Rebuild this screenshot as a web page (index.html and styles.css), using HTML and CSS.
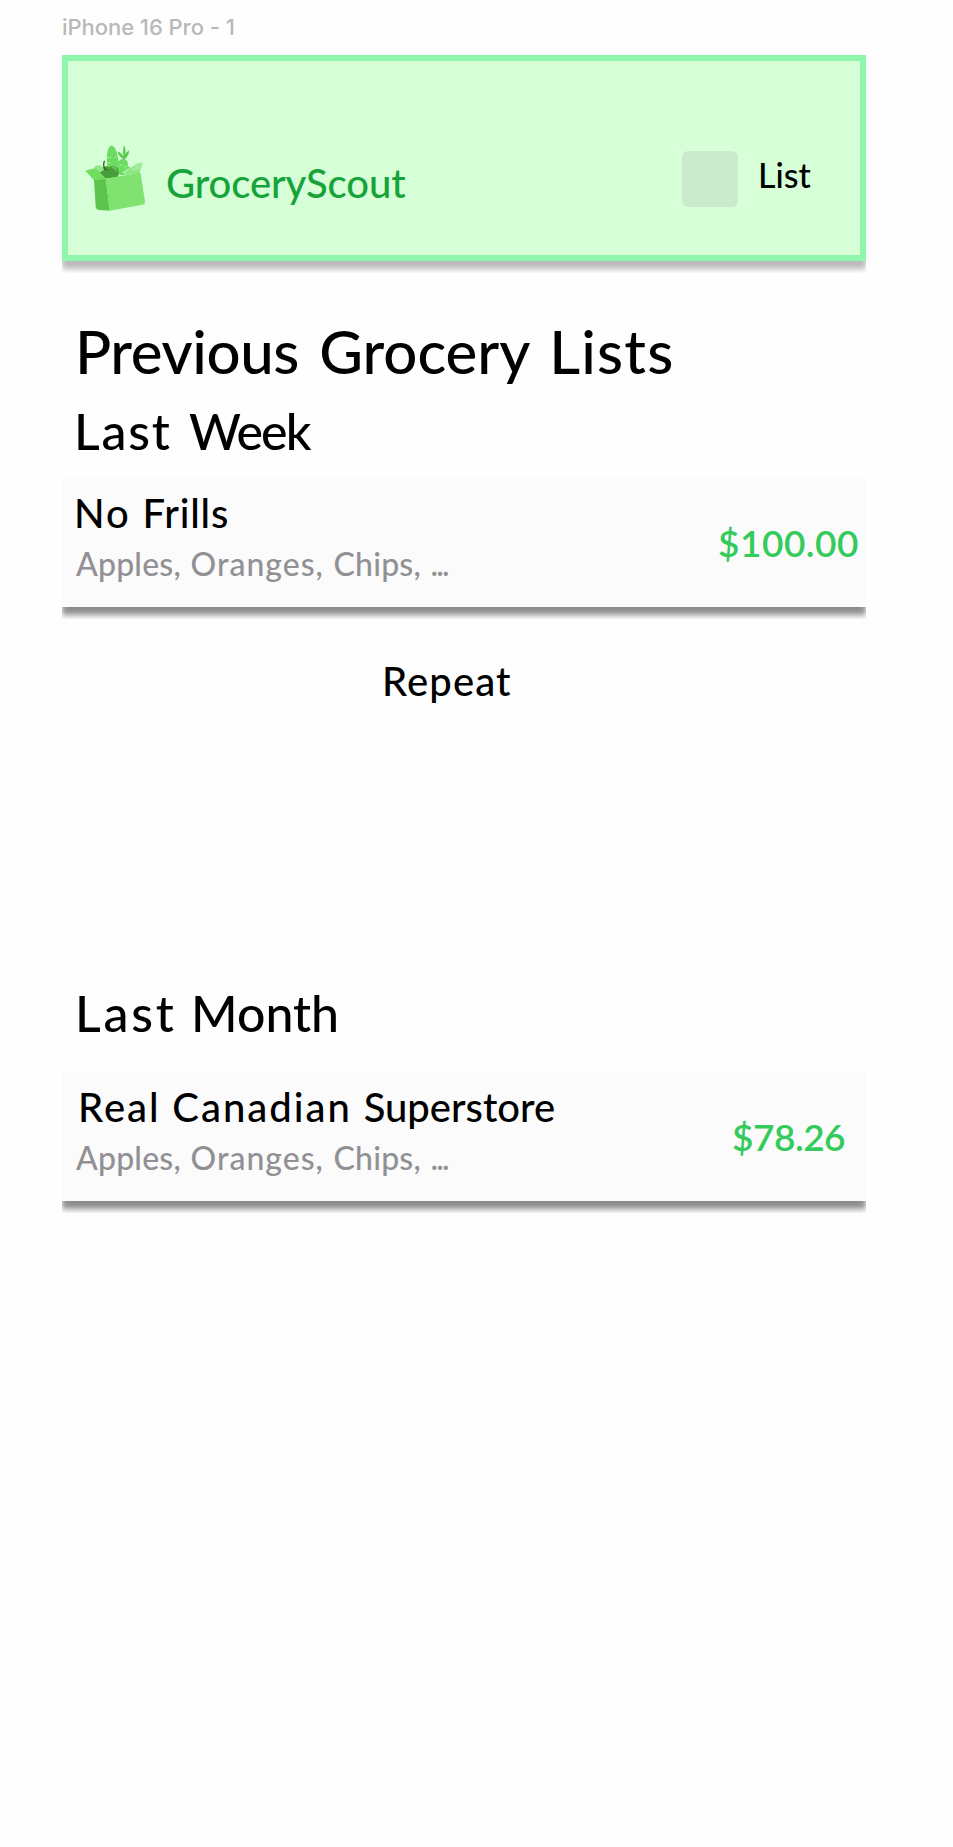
FILE: index.html
```html
<!DOCTYPE html>
<html lang="en">
<head>
<meta charset="utf-8">
<title>GroceryScout</title>
<link rel="stylesheet" href="styles.css">
</head>
<body>
<div class="frame">
  <div class="frame-label">iPhone 16 Pro - 1</div>
  <header class="header">
    <svg class="logo" viewBox="0 0 255 255" aria-hidden="true">
      <path d="M57 97 Q65 87 79 93 L96 103 L84 124 Z" fill="#8fe887"/>
      <path d="M98 100 C92 60 98 32 109 32 C122 32 130 58 132 90 L136 118 L104 118 Z" fill="#6cdc60"/>
      <path d="M97 69 L108 66 M96 85 L106 83 M119 68 L127 64" stroke="#a3f09b" stroke-width="2.5" stroke-linecap="round" fill="none"/>
      <path d="M146 71 Q143 44 148 33 Q154 47 148 71 Z M144 71 Q129 60 129 50 Q140 53 147 70 Z M147 71 Q151 52 162 47 Q161 61 149 73 Z" fill="#5ac84e" stroke="#5ac84e" stroke-width="1.5"/>
      <path d="M125 116 L127 85 Q134 70 148 72 Q160 76 159 92 L167 100 Q176 89 184 92 L188 112 L140 121 Z" fill="#6cdc60"/>
      <path d="M132 91 L141 90 M147 96 L157 93" stroke="#a3f09b" stroke-width="2.5" stroke-linecap="round"/>
      <path d="M161 91 Q168 88 170 94 Q164 98 160 94 Z" fill="#c9fac6"/>
      <path d="M142 111 L161 99 L170 102 L181 86 Q191 84 204 82 Q201 101 193 114 L150 121 Z" fill="#9fed9a"/>
      <path d="M161 102 L177 107 L194 101 L194 114 L148 121 Z" fill="#8fe687"/>
      <path d="M73 113 L87 105 C79 94 95 91 103 97 C118 88 133 98 131 114 Q131 120 129 125 L93 131 Z" fill="#489d39"/>
      <path d="M90 103 Q83 92 88 79" fill="none" stroke="#285d23" stroke-width="4" stroke-linecap="round"/>
      <path d="M89 104 Q95 106 101 103" fill="none" stroke="#2f6e27" stroke-width="3"/>
      <path d="M113 98 Q124 98 123 108" fill="none" stroke="#82c978" stroke-width="3.5" stroke-linecap="round"/>
      <path d="M31 107 L61 99 L93 131 L57 136 Z" fill="#70dd61"/>
      <path d="M57 135 L93 131 L104 227 L72 225 Q63 223 62 216 Z" fill="#5ec54c"/>
      <path d="M93 131 L194 113 Q196 113 197 116 L210 200 Q210 207 203 209 L104 227 Z" fill="#80e370"/>
    </svg>
    <div class="brand">GroceryScout</div>
    <div class="nav-icon"></div>
    <div class="nav-text">List</div>
  </header>

  <h1 class="title"><span class="w-previous">Previous</span> Grocery <span class="w-lists">Lists</span></h1>

  <h2 class="period week"><span class="w-last-week">Last</span> <span class="w-week">Week</span></h2>
  <section class="card">
    <div class="info">
      <div class="store nofrills"><span class="w-no">No</span> <span class="w-frills">Frills</span></div>
      <div class="items">Apples, <span class="w-oranges">Oranges,</span> Chips, <span class="w-dots">...</span></div>
    </div>
    <div class="price hundred">$100.00</div>
  </section>
  <div class="repeat">Repeat</div>

  <h2 class="period month"><span class="w-last">Last</span> <span>Month</span></h2>
  <section class="card">
    <div class="info">
      <div class="store superstore"><span class="w-no">Real</span> <span class="w-no">Canadian</span> <span>Superstore</span></div>
      <div class="items">Apples, <span class="w-oranges">Oranges,</span> Chips, <span class="w-dots">...</span></div>
    </div>
    <div class="price seventy">$78.26</div>
  </section>
</div>
</body>
</html>
```
FILE: styles.css
```css
* { box-sizing: border-box; }

body {
  margin: 0;
  background: #fefefe;
  color: #000;
  font-family: Lato, sans-serif;
  font-weight: 500;
}

.frame {
  width: 804px;
  height: 1847px;
  margin-left: 62px;
  white-space: nowrap;
}

.frame-label {
  height: 55px;
  font: 500 22px/55px Inter, sans-serif;
  letter-spacing: -.05px;
  color: #b8b8b8;
}

.header {
  display: flex;
  align-items: flex-start;
  height: 206px;
  border: 6px solid #90f6ab;
  background: #d6ffd8;
  box-shadow: 0 8px 6px rgba(0, 0, 0, .27);
  clip-path: inset(0 0 -12px 0);
}

.logo { width: 85px; height: 85px; margin: 74px 0 0 7px; }

.brand {
  width: 516px;
  margin: 102px 0 0 6px;
  font-size: 40px;
  line-height: 40px;
  letter-spacing: -.1px;
  color: #16a43a;
}

.nav-icon {
  width: 56px;
  height: 56px;
  margin-top: 90px;
  border-radius: 6px;
  background: #caeccd;
}

.nav-text {
  margin: 97px 0 0 20px;
  font-size: 34px;
  line-height: 34px;
}

.title {
  margin: 60px 0 0 13px;
  font-size: 60px;
  font-weight: 500;
  line-height: 60px;
  word-spacing: 5px;
}

.w-previous { letter-spacing: -.4px; }
.w-lists { letter-spacing: 1.2px; }

.period {
  margin: 0;
  font-size: 50px;
  font-weight: 500;
  line-height: 50px;
}

.week { margin: 25px 0 21px 12px; word-spacing: 4.7px; }
.month { margin: 287px 0 33px 13px; word-spacing: 1.7px; }

.w-last { letter-spacing: 2.8px; }
.w-last-week { letter-spacing: 1.8px; }
.w-week { letter-spacing: -1.8px; }
.w-no { letter-spacing: 2px; }
.w-frills { letter-spacing: .8px; }
.w-oranges { letter-spacing: 1px; }
.w-dots { letter-spacing: -1.8px; }

.card {
  display: flex;
  align-items: center;
  justify-content: space-between;
  height: 130px;
  background: #fbfbfb;
  box-shadow: 0 8px 6px rgba(0, 0, 0, .45);
  clip-path: inset(0 0 -12px 0);
}

.info { align-self: flex-start; padding-top: 16px; }

.store {
  font-size: 40px;
  line-height: 40px;
  word-spacing: 1.6px;
}

.nofrills { margin-left: 12px; }
.superstore { margin-left: 16px; }

.items {
  margin: 15px 0 0 14px;
  font-size: 32px;
  line-height: 32px;
  letter-spacing: .2px;
  word-spacing: 1.3px;
  color: #919195;
}

.price {
  font-size: 37px;
  font-weight: 600;
  line-height: 37px;
  color: #34ca5c;
}

.hundred { width: 148px; letter-spacing: .5px; }
.seventy { width: 134px; letter-spacing: -.5px; }

.repeat {
  margin: 54px 0 0 320px;
  font-size: 40px;
  line-height: 40px;
  letter-spacing: 1.1px;
}
```
